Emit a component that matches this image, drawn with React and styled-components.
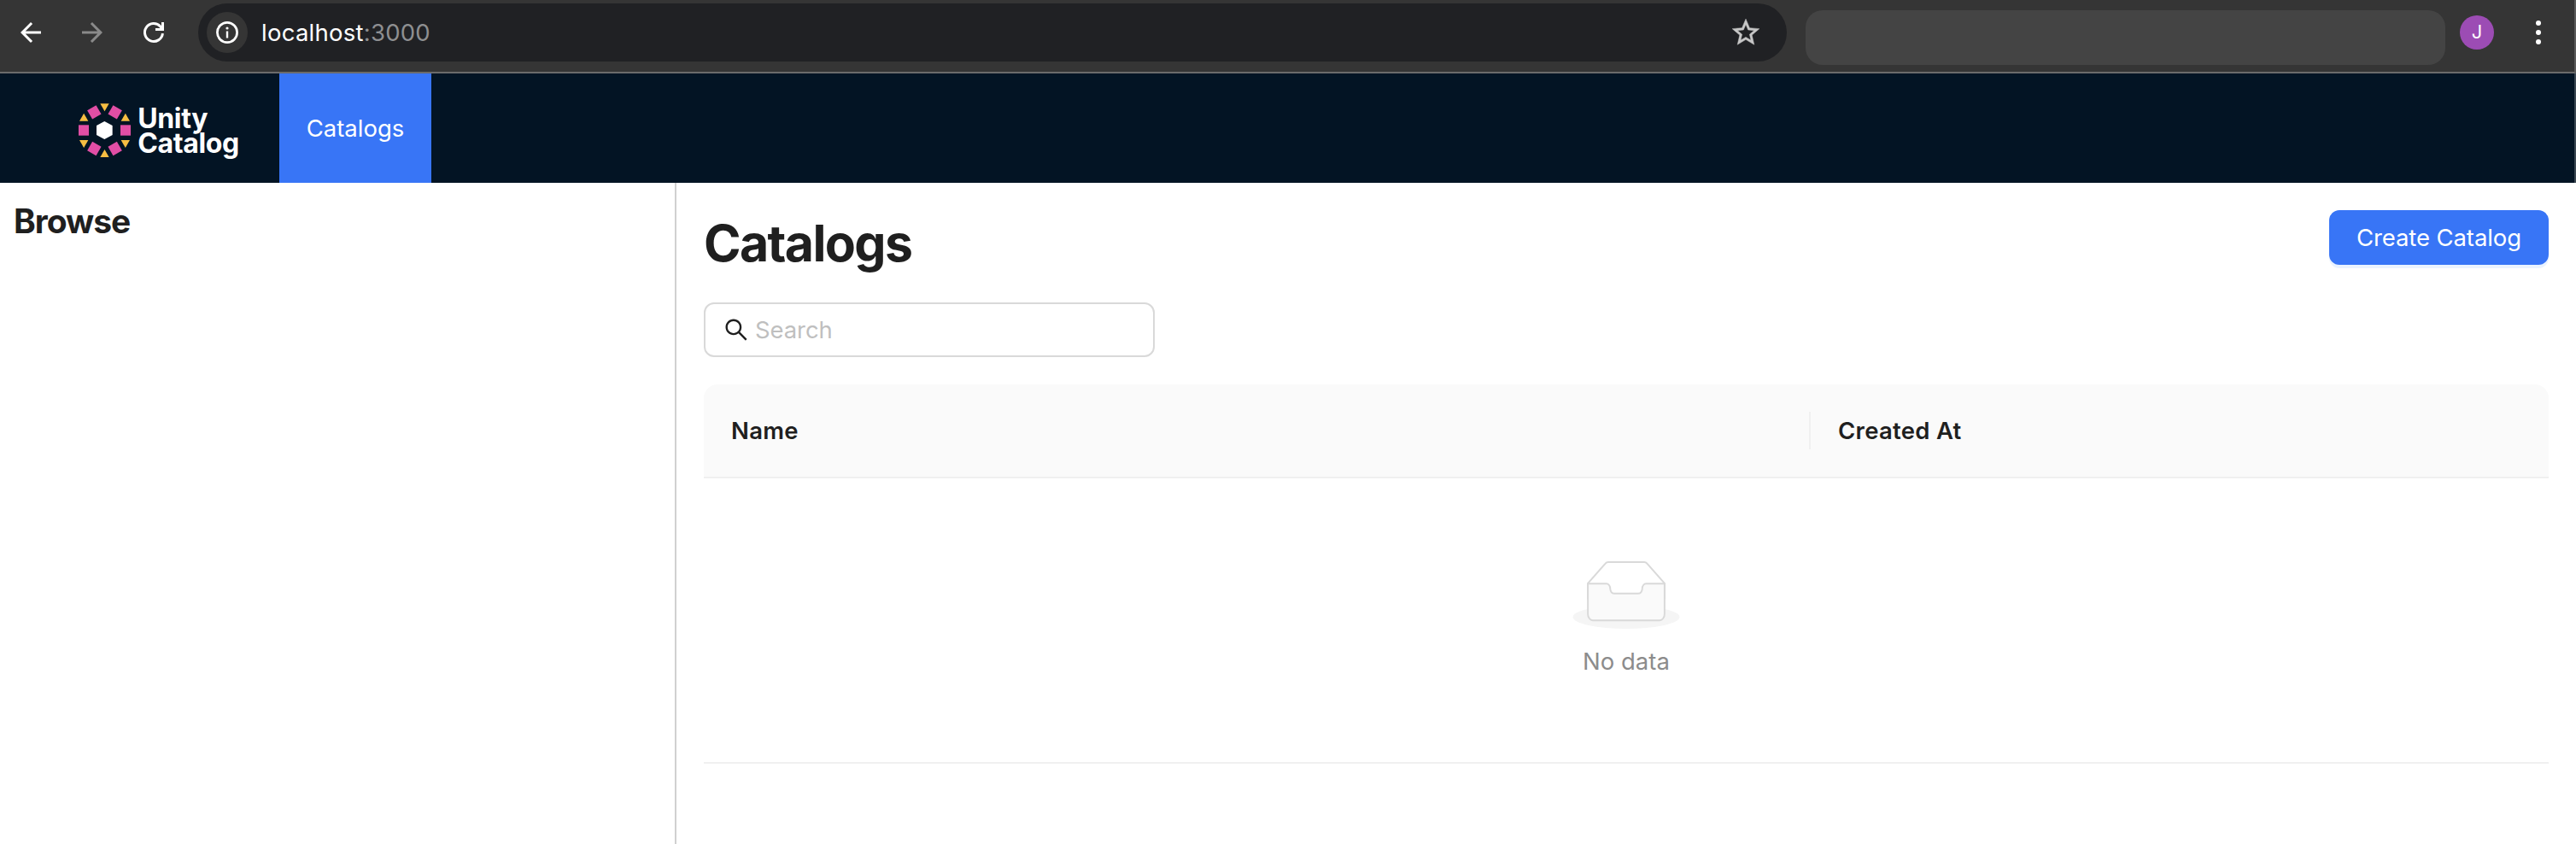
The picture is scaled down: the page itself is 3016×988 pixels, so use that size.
import React from "react";
import styled, { createGlobalStyle } from "styled-components";

const GlobalStyle = createGlobalStyle`
  *, *::before, *::after { box-sizing: border-box; }
  html, body { margin: 0; padding: 0; background: #fff; }
  body { font-family: Inter, "Liberation Sans", sans-serif; color: #1f1f1f; }
  button, input { font-family: inherit; }
`;

const Page = styled.div`
  display: flex;
  flex-direction: column;
  width: 3016px;
  height: 988px;
  overflow: hidden;
`;

const BrowserBar = styled.div`
  display: flex;
  align-items: flex-start;
  height: 86px;
  padding: 4px 0 0 18px;
  background: #353535;
  border-bottom: 2px solid #6b6b6b;
  border-right: 2px solid #5a5a5a;
`;

const NavButtons = styled.div`
  display: flex;
  gap: 36px;
  width: 214px;
  padding-top: 16px;
`;

const Glyph = styled.svg`
  display: block;
  flex: none;
  width: ${(p) => p.$size}px;
  height: ${(p) => p.$size}px;
  fill: ${(p) => p.$color || "#fff"};
`;

const AddressBar = styled.div`
  display: flex;
  align-items: center;
  width: 1860px;
  height: 68px;
  padding: 0 29px 0 10px;
  border-radius: 34px;
  background: #202124;
`;

const SiteInfo = styled.span`
  display: flex;
  align-items: center;
  justify-content: center;
  width: 48px;
  height: 48px;
  border-radius: 50%;
  background: #353535;
`;

const Url = styled.span`
  flex: 1;
  margin-left: 16px;
  font-size: 27.5px;
  line-height: 69px;
  letter-spacing: 0.25px;
  color: #fff;
`;

const Port = styled.span`
  color: #8e8f91;
`;

const ExtensionArea = styled.div`
  width: 749px;
  height: 64px;
  margin: 8px 17px 0 22px;
  border-radius: 20px;
  background: #444;
`;

const Avatar = styled.div`
  width: 40px;
  height: 40px;
  margin: 14px 49px 0 0;
  border-radius: 50%;
  background: #9c4cb4;
  color: #fff;
  font-size: 22px;
  line-height: 39px;
  text-align: center;
`;

const MenuDots = styled.div`
  display: flex;
  flex-direction: column;
  gap: 5px;
  padding-top: 20px;
`;

const Dot = styled.span`
  width: 6px;
  height: 6px;
  border-radius: 50%;
  background: #fff;
`;

const AppHeader = styled.header`
  display: flex;
  height: 128px;
  padding-left: 92px;
  background: #031424;
  border-right: 2px solid #3a4651;
`;

const Brand = styled.div`
  display: flex;
  gap: 8px;
  width: 235px;
  padding-top: 34px;
`;

const BrandMark = styled.svg`
  flex: none;
  width: 61.33px;
  height: 65.33px;
`;

const BrandName = styled.div`
  padding-top: 4px;
  color: #fff;
  font-size: 32px;
  font-weight: 700;
  line-height: 29px;
  letter-spacing: -0.4px;
`;

const NavTab = styled.a`
  width: 178px;
  background: #3875f6;
  color: #fff;
  font-size: 27.5px;
  line-height: 128px;
  text-align: center;
`;

const Body = styled.div`
  display: flex;
  flex: 1;
`;

const Sidebar = styled.aside`
  width: 792px;
  padding: 17px 16px;
  border-right: 2px solid #d0d0d0;
`;

const SidebarTitle = styled.h3`
  margin: 0;
  font-size: 39px;
  font-weight: 700;
  line-height: 56px;
  letter-spacing: -1px;
`;

const Main = styled.main`
  flex: 1;
  padding: 32px;
`;

const TitleRow = styled.div`
  display: flex;
  justify-content: space-between;
  align-items: flex-start;
  height: 108px;
`;

const Title = styled.h1`
  margin: 0;
  font-size: 59px;
  font-weight: 700;
  line-height: 77px;
  letter-spacing: -1.65px;
`;

const PrimaryButton = styled.button`
  width: 257px;
  height: 64px;
  padding: 0;
  border: 0;
  border-radius: 12px;
  background: #3875f6;
  box-shadow: 0 4px 0 #eaf3ff;
  color: #fff;
  font-size: 27.5px;
  line-height: 64px;
  letter-spacing: -0.1px;
`;

const SearchBox = styled.label`
  display: flex;
  align-items: center;
  gap: 8px;
  width: 528px;
  height: 64px;
  padding: 0 22px;
  border: 2px solid #d9d9d9;
  border-radius: 12px;
`;

const SearchInput = styled.input`
  flex: 1;
  padding: 0;
  border: 0;
  outline: 0;
  background: none;
  font-size: 27.5px;
  letter-spacing: -0.1px;
  &::placeholder { color: #bfbfbf; opacity: 1; }
`;

const Table = styled.div`
  margin-top: 32px;
`;

const TableHead = styled.div`
  display: flex;
  align-items: center;
  height: 110px;
  border-bottom: 2px solid #f0f0f0;
  border-radius: 16px 16px 0 0;
  background: #fafafa;
`;

const HeadCell = styled.div`
  width: ${(p) => p.$width}px;
  height: 44px;
  padding-left: 32px;
  border-right: ${(p) => (p.$divider ? "2px solid #f0f0f0" : "0")};
  font-size: 27.5px;
  font-weight: 600;
  line-height: 44px;
  letter-spacing: 0.28px;
`;

const EmptyState = styled.div`
  display: flex;
  flex-direction: column;
  align-items: center;
  height: 334px;
  padding-top: 96px;
  border-bottom: 2px solid #f0f0f0;
`;

const EmptyBox = styled.svg`
  display: block;
  width: 128px;
  height: 80px;
`;

const EmptyText = styled.div`
  margin-top: 16px;
  font-size: 27.5px;
  line-height: 44px;
  color: #8c8c8c;
`;

function Logo() {
  const pink = "#e14ea5";
  const gold = "#f7be42";
  return (
    <BrandMark viewBox="36 60 184 196">
      <path fill="#fff" d="M127 126l28 15v33l-28 15-28-15v-33z" />
      <g fill={pink}>
        <rect x="36" y="139" width="36" height="37" />
        <rect x="183" y="139" width="36" height="37" />
        <rect x="73" y="76" width="36" height="36" transform="rotate(-30 91 94)" />
        <rect x="146" y="76" width="36" height="36" transform="rotate(30 164 94)" />
        <rect x="73" y="204" width="36" height="36" transform="rotate(30 91 222)" />
        <rect x="146" y="204" width="36" height="36" transform="rotate(-30 164 222)" />
      </g>
      <g fill={gold}>
        <path d="M112 64h31l-15.5 27z" />
        <path d="M112 252h31l-15.5-27z" />
        <path d="M39 125h31L54.5 98z" />
        <path d="M185 125h31l-15.5-27z" />
        <path d="M39 192h31l-15.5 27z" />
        <path d="M185 192h31l-15.5 27z" />
      </g>
    </BrandMark>
  );
}

export default function App() {
  return (
    <Page>
      <GlobalStyle />
      <BrowserBar>
        <NavButtons>
          <Glyph $size={36} viewBox="0 0 24 24">
            <path d="M20 11H7.83l5.59-5.59L12 4l-8 8 8 8 1.41-1.41L7.83 13H20v-2z" />
          </Glyph>
          <Glyph $size={36} $color="#8a8a8a" viewBox="0 0 24 24">
            <path d="M4 11h12.17l-5.59-5.59L12 4l8 8-8 8-1.41-1.41L16.17 13H4v-2z" />
          </Glyph>
          <Glyph $size={36} viewBox="0 0 24 24">
            <g fill="none" stroke="#fff" strokeWidth="2">
              <path d="M18.96 12.7A7 7 0 1 1 17.2 7.3L19 9.500" />
              <path d="M19 4v5.700h-5.700" />
            </g>
          </Glyph>
        </NavButtons>
        <AddressBar>
          <SiteInfo>
            <Glyph $size={28} viewBox="0 0 28 28">
              <circle cx="14" cy="14" r="11.6" fill="none" stroke="#fff" strokeWidth="2.7" />
              <circle cx="14" cy="9" r="1.6" />
              <rect x="12.8" y="12.5" width="2.4" height="8" />
            </Glyph>
          </SiteInfo>
          <Url>
            localhost<Port>:3000</Port>
          </Url>
          <Glyph $size={38} $color="#c7c7c7" viewBox="0 0 24 24">
            <path stroke="#c7c7c7" strokeWidth="0.3" d="M22 9.24l-7.19-.62L12 2 9.19 8.63 2 9.24l5.46 4.73L5.82 21 12 17.27 18.18 21l-1.63-7.03L22 9.24zM12 15.4l-3.76 2.27 1-4.28-3.32-2.88 4.38-.38L12 6.1l1.71 4.04 4.38.38-3.32 2.88 1 4.28L12 15.4z" />
          </Glyph>
        </AddressBar>
        <ExtensionArea />
        <Avatar>J</Avatar>
        <MenuDots>
          <Dot />
          <Dot />
          <Dot />
        </MenuDots>
      </BrowserBar>
      <AppHeader>
        <Brand>
          <Logo />
          <BrandName>
            Unity
            <br />
            Catalog
          </BrandName>
        </Brand>
        <NavTab>Catalogs</NavTab>
      </AppHeader>
      <Body>
        <Sidebar>
          <SidebarTitle>Browse</SidebarTitle>
        </Sidebar>
        <Main>
          <TitleRow>
            <Title>Catalogs</Title>
            <PrimaryButton>Create Catalog</PrimaryButton>
          </TitleRow>
          <SearchBox>
            <Glyph $size={28} $color="#1f1f1f" viewBox="64 64 896 896">
              <path d="M909.6 854.5L649.9 594.8C690.2 542.7 712 479 712 412c0-80.2-31.3-155.4-87.9-212.1-56.6-56.7-132-87.9-212.1-87.9s-155.5 31.3-212.1 87.9C143.2 256.5 112 331.8 112 412c0 80.1 31.3 155.5 87.9 212.1C256.5 680.8 331.8 712 412 712c67 0 130.6-21.8 182.7-62l259.7 259.6a8.2 8.2 0 0011.6 0l43.6-43.5a8.2 8.2 0 000-11.6zM570.4 570.4C528 612.7 471.8 636 412 636s-116-23.3-158.4-65.6C211.3 528 188 471.8 188 412s23.3-116.1 65.6-158.4C296 211.3 352.2 188 412 188s116.1 23.2 158.4 65.6S636 352.2 636 412s-23.3 116.1-65.6 158.4z" />
            </Glyph>
            <SearchInput placeholder="Search" />
          </SearchBox>
          <Table>
            <TableHead>
              <HeadCell $width={1296} $divider>Name</HeadCell>
              <HeadCell $width={864}>Created At</HeadCell>
            </TableHead>
            <EmptyState>
              <EmptyBox viewBox="0 0 64 41">
                <g transform="translate(0 1)" fill="none" fillRule="evenodd">
                  <ellipse fill="#f5f5f5" cx="32" cy="33" rx="32" ry="7" />
                  <g fillRule="nonzero" stroke="#d9d9d9">
                    <path fill="#fff" d="M55 12.76L44.854 1.258C44.367.474 43.656 0 42.907 0H21.093c-.749 0-1.46.474-1.947 1.257L9 12.761V22h46v-9.24z" />
                    <path fill="#fafafa" d="M41.613 15.931c0-1.605.994-2.93 2.227-2.931H55v18.137C55 33.26 53.68 35 52.05 35h-40.1C10.32 35 9 33.259 9 31.137V13h11.16c1.233 0 2.227 1.323 2.227 2.928v.022c0 1.605 1.005 2.901 2.237 2.901h14.752c1.232 0 2.237-1.308 2.237-2.913v-.007z" />
                  </g>
                </g>
              </EmptyBox>
              <EmptyText>No data</EmptyText>
            </EmptyState>
          </Table>
        </Main>
      </Body>
    </Page>
  );
}
